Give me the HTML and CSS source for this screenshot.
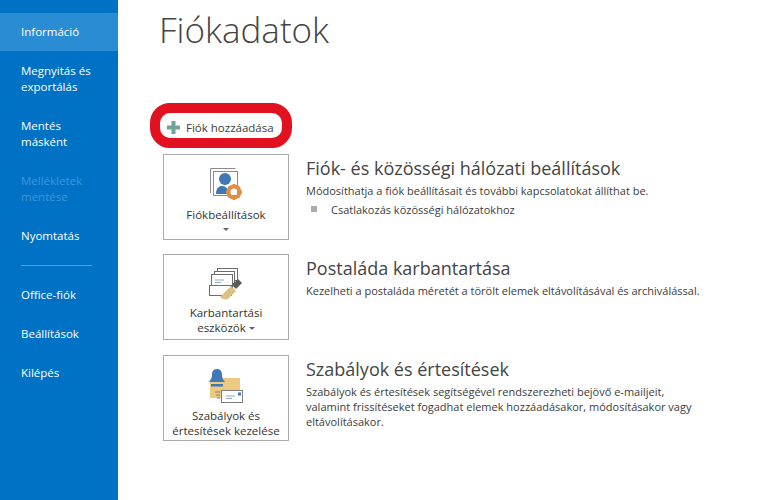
FILE: index.html
```html
<!DOCTYPE html>
<html lang="hu">
<head>
    <meta charset="UTF-8">
    <title>Fiókadatok</title>
    <link rel="stylesheet" href="styles.css">
</head>
<body>
    <nav class="sidebar">
        <div class="nav-item active">Információ</div>
        <div class="nav-item">Megnyitás és exportálás</div>
        <div class="nav-item">Mentés másként</div>
        <div class="nav-item disabled">Mellékletek mentése</div>
        <div class="nav-item">Nyomtatás</div>
        <div class="nav-divider"></div>
        <div class="nav-item">Office-fiók</div>
        <div class="nav-item">Beállítások</div>
        <div class="nav-item">Kilépés</div>
    </nav>

    <main class="content">
        <h1 class="page-title">Fiókadatok</h1>

        <div class="add-account">
            <svg class="plus-icon" width="13" height="13" viewBox="0 0 13 13">
                <path d="M4.5 0h4v4.5H13v4H8.5V13h-4V8.500H0v-4h4.500z" fill="#6fa596"/>
            </svg>
            Fiók hozzáadása
            <div class="highlight"></div>
        </div>

        <section class="row row-account">
            <div class="tile">
                <svg class="tile-icon" width="36" height="36" viewBox="0 0 36 36">
                    <path d="M2.500 26V1.500h25" fill="none" stroke="#8a8a8a"/>
                    <rect x="5.500" y="4.500" width="24" height="24" fill="#fff" stroke="#8a8a8a"/>
                    <circle cx="17" cy="12" r="6" fill="#3f78b5"/>
                    <path d="M8 27c0-6 3-8 6-8s5 2 6 4v4z" fill="#3f78b5"/>
                    <circle cx="26" cy="25" r="5.500" fill="none" stroke="#e08e43" stroke-width="4"/>
                    <path d="M26 17v4M26 29v4M18 25h4M30 25h4M20.500 19.500l2.500 2.500M29 28l2.500 2.500M31.500 19.500L29 22M23 28l-2.500 2.500" stroke="#e08e43" stroke-width="2.500"/>
                </svg>
                <div class="tile-label">Fiókbeállítások</div>
                <div class="caret caret-below"></div>
            </div>
            <div class="row-text">
                <h2 class="row-title">Fiók- és közösségi hálózati beállítások</h2>
                <p class="row-desc">Módosíthatja a fiók beállításait és további kapcsolatokat állíthat be.</p>
                <div class="bullet">Csatlakozás közösségi hálózatokhoz</div>
            </div>
        </section>

        <section class="row row-mailbox">
            <div class="tile">
                <svg class="tile-icon" width="36" height="34" viewBox="0 0 36 34">
                    <g fill="#fff" stroke="#6d6d6d">
                        <rect x="9.500" y="1.500" width="20" height="12"/>
                        <rect x="6.500" y="4.500" width="20" height="12"/>
                        <rect x="3.500" y="7.500" width="21" height="13"/>
                        <rect x="1.500" y="18.500" width="22" height="10"/>
                    </g>
                    <path d="M7 13h9M7 15.500h6" stroke="#8fa9c4"/>
                    <path d="M15 27l8-8 5 5-8 8c-3 1-6 0-8-2z" fill="#dcc083"/>
                    <path d="M24 18l6-6 4 4-6 6z" fill="#5a5a5a"/>
                </svg>
                <div class="tile-label">Karbantartási<br>eszközök<span class="caret caret-inline"></span></div>
            </div>
            <div class="row-text">
                <h2 class="row-title">Postaláda karbantartása</h2>
                <p class="row-desc">Kezelheti a postaláda méretét a törölt elemek eltávolításával és archiválással.</p>
            </div>
        </section>

        <section class="row row-rules">
            <div class="tile">
                <svg class="tile-icon" width="36" height="36" viewBox="0 0 36 36">
                    <path d="M2 14h10l3-4h17v20H2z" fill="#eccb80"/>
                    <path d="M8 1c-4 0-5 3-5 6 0 4-2 5-3 7h16c-1-2-3-3-3-7 0-3-1-6-5-6z" fill="#3f78b5" transform="translate(1 0)"/>
                    <rect x="3" y="16" width="12" height="2.500" fill="#3f78b5"/>
                    <rect x="13.500" y="22.500" width="21" height="12" fill="#fff" stroke="#7d7d7d"/>
                    <path d="M18 28h9M18 30.500h6" stroke="#8fa9c4"/>
                    <rect x="30" y="24.500" width="3" height="3" fill="#3f78b5"/>
                    <path d="M7 24h5M8 27h4M9 30h3" stroke="#7d7d7d"/>
                </svg>
                <div class="tile-label">Szabályok és<br>értesítések kezelése</div>
            </div>
            <div class="row-text">
                <h2 class="row-title">Szabályok és értesítések</h2>
                <p class="row-desc">Szabályok és értesítések segítségével rendszerezheti bejövő e-mailjeit,<br>valamint frissítéseket fogadhat elemek hozzáadásakor, módosításakor vagy<br>eltávolításakor.</p>
            </div>
        </section>
    </main>
</body>
</html>
```

FILE: styles.css
```css
* {
    margin: 0;
    padding: 0;
    box-sizing: border-box;
}

body {
    display: flex;
    height: 500px;
    overflow: hidden;
    background: #fff;
    color: #3c3c3c;
    font-family: 'Open Sans', sans-serif;
    font-size: 11px;
}

/* left menu */
.sidebar {
    width: 118px;
    flex-shrink: 0;
    padding-top: 13px;
    background: #0072c6;
}

.nav-item {
    padding: 11px 12px 11px 21px;
    margin-bottom: 1px;
    color: #fff;
    font-size: 11.500px;
    line-height: 16px;
}

.nav-item.active {
    background: #2a8dd4;
}

.nav-item.disabled {
    color: #3f96d8;
}

.nav-divider {
    width: 71px;
    height: 1px;
    margin: 10px 0 10px 21px;
    background: #4da0dc;
}

/* main area */
.content {
    flex: 1;
    padding: 10px 0 0 41px;
}

.page-title {
    color: #444;
    font-size: 35px;
    font-weight: 300;
    line-height: 40px;
    margin-bottom: 65px;
}

.add-account {
    position: relative;
    display: flex;
    align-items: center;
    gap: 6px;
    width: 120px;
    height: 24px;
    margin: 0 0 15px 3px;
    padding-left: 5px;
    font-size: 11.500px;
}

/* red marker drawn over the screenshot */
.highlight {
    position: absolute;
    inset: -12px -10px -9px -12px;
    border: 10px solid #e2111f;
    border-radius: 20px;
}

.row {
    display: flex;
    align-items: flex-start;
    margin-left: 4px;
}

.row-account {
    margin-bottom: 14px;
}

.row-mailbox {
    margin-bottom: 15px;
}

.tile {
    display: flex;
    flex-direction: column;
    align-items: center;
    width: 126px;
    height: 86px;
    padding-top: 12px;
    border: 1px solid #ababab;
    flex-shrink: 0;
}

.tile-icon {
    flex-shrink: 0;
    margin-bottom: 4px;
}

.tile-label {
    color: #333;
    font-size: 11.500px;
    line-height: 15px;
    text-align: center;
}

.caret {
    width: 0;
    height: 0;
    border-left: 3px solid transparent;
    border-right: 3px solid transparent;
    border-top: 3px solid #666;
}

.caret-below {
    margin-top: 6px;
}

.caret-inline {
    display: inline-block;
    margin-left: 3px;
    vertical-align: middle;
}

.row-text {
    padding: 2px 0 0 17px;
}

.row-title {
    color: #444;
    font-size: 18px;
    font-weight: 400;
    line-height: 24px;
    margin-bottom: 3px;
}

.row-desc {
    font-size: 11px;
    line-height: 15px;
}

.bullet {
    position: relative;
    margin-top: 4px;
    padding-left: 25px;
    font-size: 11px;
    line-height: 15px;
}

.bullet::before {
    content: '';
    position: absolute;
    left: 5px;
    top: 4px;
    width: 6px;
    height: 6px;
    background: #ababab;
}
```
